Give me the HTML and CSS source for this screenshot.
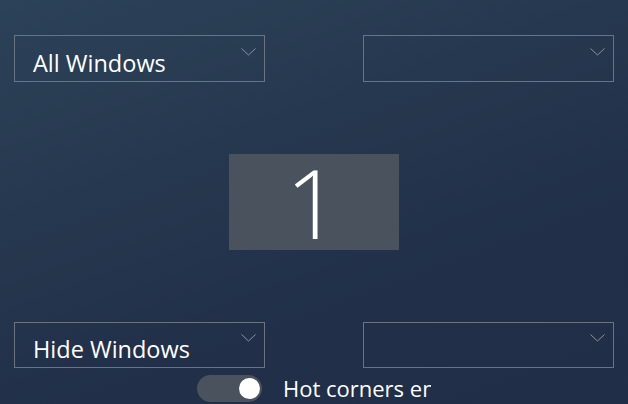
FILE: index.html
```html
<!DOCTYPE html>
<html>
<head>
<meta charset="utf-8">
<link rel="stylesheet" href="styles.css">
</head>
<body>
<div class="screen">
  <div class="row">
    <div class="dropdown">
      <span class="label">All Windows</span>
      <svg class="chev" width="15" height="8" viewBox="0 0 15 8"><polyline points="0.5,0.5 7.5,7 14.5,0.5" fill="none" stroke="#8a929c" stroke-width="1"/></svg>
    </div>
    <div class="dropdown">
      <span class="label"></span>
      <svg class="chev" width="15" height="8" viewBox="0 0 15 8"><polyline points="0.5,0.5 7.5,7 14.5,0.5" fill="none" stroke="#8a929c" stroke-width="1"/></svg>
    </div>
  </div>
  <div class="monitor-area">
    <div class="monitor">1</div>
  </div>
  <div class="row bottom">
    <div class="dropdown">
      <span class="label">Hide Windows</span>
      <svg class="chev" width="15" height="8" viewBox="0 0 15 8"><polyline points="0.5,0.5 7.5,7 14.5,0.5" fill="none" stroke="#8a929c" stroke-width="1"/></svg>
    </div>
    <div class="dropdown">
      <span class="label"></span>
      <svg class="chev" width="15" height="8" viewBox="0 0 15 8"><polyline points="0.5,0.5 7.5,7 14.5,0.5" fill="none" stroke="#8a929c" stroke-width="1"/></svg>
    </div>
  </div>
  <div class="toggle-row">
    <div class="toggle"><div class="knob"></div></div>
    <span class="toggle-label">Hot corners enabled</span>
  </div>
</div>
</body>
</html>
```

FILE: styles.css
```css
html, body {
  margin: 0;
  padding: 0;
  width: 628px;
  height: 404px;
  overflow: hidden;
}
body {
  background: linear-gradient(160deg, #2c4258 0%, #26384f 35%, #212f48 70%, #202e47 100%);
  font-family: "Open Sans", "Noto Sans", sans-serif;
  color: #ffffff;
}
.screen {
  display: flex;
  flex-direction: column;
  padding-top: 35px;
  height: 404px;
  box-sizing: border-box;
}
.row {
  display: flex;
  justify-content: space-between;
  padding: 0 14px 0 14px;
}
.dropdown {
  width: 251px;
  height: 47px;
  box-sizing: border-box;
  border: 1px solid #6a737e;
  display: flex;
  align-items: flex-start;
  padding-left: 18px;
}
.label {
  font-size: 23.5px;
  line-height: 28px;
  margin-top: 13px;
  white-space: nowrap;
}
.chev {
  margin-left: auto;
  margin-right: 8px;
  margin-top: 12px;
  flex: none;
}
.bottom .chev {
  margin-top: 11px;
}
.bottom .label {
  margin-top: 12px;
}
.monitor-area {
  display: flex;
  justify-content: center;
  margin-top: 72px;
}
.monitor {
  width: 170px;
  height: 96px;
  background: #4a525e;
  display: flex;
  align-items: center;
  justify-content: center;
  font-size: 96px;
  font-weight: 200;
  line-height: 96px;
  padding-right: 2px;
  box-sizing: border-box;
}
.bottom {
  margin-top: 72px;
}
.bottom .dropdown {
  height: 46px;
}
.toggle-row {
  width: 234px;
  margin: 7px auto 0;
  display: flex;
  align-items: center;
  overflow: hidden;
  white-space: nowrap;
}
.toggle {
  width: 65px;
  height: 27px;
  border-radius: 14px;
  background: #4a525e;
  display: flex;
  align-items: center;
  justify-content: flex-end;
  padding-right: 2px;
  box-sizing: border-box;
  flex: none;
}
.knob {
  width: 21px;
  height: 21px;
  border-radius: 50%;
  background: #ffffff;
}
.toggle-label {
  margin-left: 21px;
  font-size: 22px;
  line-height: 27px;
}
```
